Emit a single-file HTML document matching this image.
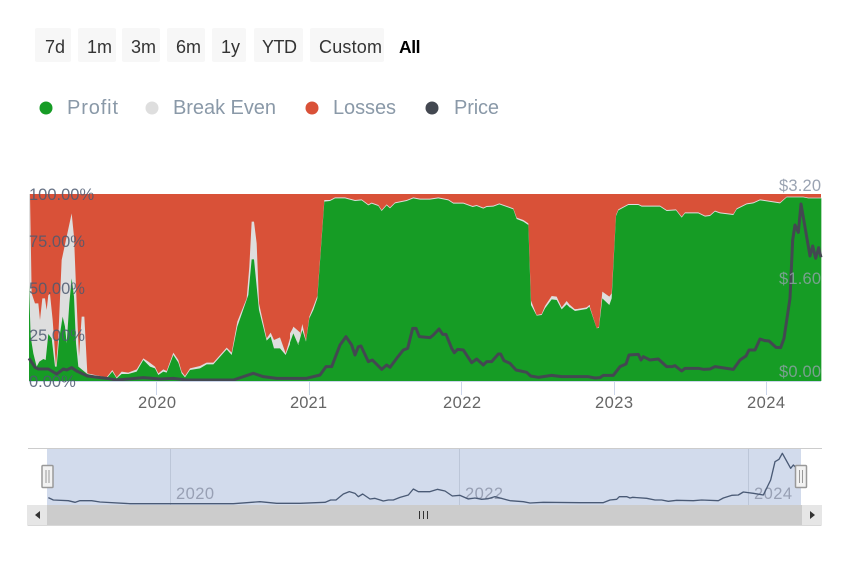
<!DOCTYPE html>
<html><head><meta charset="utf-8">
<style>
html,body{margin:0;padding:0;background:#fff;width:850px;height:567px;overflow:hidden}
svg{position:absolute;left:0;top:0}
text{font-family:"Liberation Sans",sans-serif}
</style></head><body>
<svg width="850" height="567" viewBox="0 0 850 567" xmlns="http://www.w3.org/2000/svg">
<!-- range buttons -->
<g fill="#f7f7f7">
<rect x="35" y="28" width="36" height="34" rx="2"/>
<rect x="78" y="28" width="38" height="34" rx="2"/>
<rect x="122" y="28" width="38" height="34" rx="2"/>
<rect x="167" y="28" width="38" height="34" rx="2"/>
<rect x="212" y="28" width="34" height="34" rx="2"/>
<rect x="254" y="28" width="49" height="34" rx="2"/>
<rect x="310" y="28" width="74" height="34" rx="2"/>
</g>
<g font-size="18" fill="#333">
<text x="45" y="53">7d</text>
<text x="87" y="53">1m</text>
<text x="131" y="53">3m</text>
<text x="176" y="53">6m</text>
<text x="221" y="53">1y</text>
<text x="262" y="53" textLength="35">YTD</text>
<text x="319" y="53" textLength="63">Custom</text>
</g>
<text x="399" y="53" font-size="17.500" font-weight="bold" fill="#000" textLength="21.500">All</text>
<!-- legend -->
<circle cx="46" cy="108" r="6.5" fill="#169c25"/>
<circle cx="152" cy="108" r="6.5" fill="#dedede"/>
<circle cx="312" cy="108" r="6.5" fill="#d95138"/>
<circle cx="432" cy="108" r="6.5" fill="#434851"/>
<g font-size="20" fill="#8a99a8">
<text x="67" y="114" textLength="51">Profit</text>
<text x="173" y="114" textLength="103">Break Even</text>
<text x="333" y="114" textLength="63">Losses</text>
<text x="454" y="114" textLength="45">Price</text>
</g>
<!-- plot -->
<rect x="29" y="194" width="792" height="187" fill="#d95138"/>
<g transform="translate(0,170) scale(.33333)">
<polygon fill="#dedede" points="87,633 87,72 90,72 95,370 105,400 115,400 120,450 127,385 135,385 140,420 145,375 150,372 158,450 168,590 175,500 185,270 200,200 215,130 222,200 230,400 237,560 245,440 253,440 262,610 320,622 337,600 350,622 365,605 385,608 410,598 430,565 445,575 465,590 475,610 490,598 500,603 520,548 535,570 545,605 555,618 570,595 600,588 620,578 640,578 680,533 695,548 712,455 740,385 748,290 755,155 762,155 770,220 777,400 800,505 812,488 822,510 840,502 857,550 880,470 900,487 900,633"/>
<polygon fill="#169c25" points="87,633 87,345 92,500 100,550 110,590 118,575 130,567 137,570 145,492 155,505 165,590 170,590 177,510 188,440 195,470 200,520 208,400 215,325 222,380 228,520 235,590 262,612 320,625 337,605 350,625 365,612 385,612 410,605 430,570 450,590 465,595 475,615 490,605 500,608 520,555 535,578 545,610 555,622 570,600 600,595 620,583 640,583 680,538 695,555 712,470 745,375 755,268 762,268 770,350 777,420 800,512 812,500 822,535 840,535 857,555 880,497 900,525 900,633"/>
<polyline fill="none" stroke="#434851" stroke-width="9" stroke-linejoin="round" points="87,565 105,592 115,597 145,597 170,612 190,597 200,600 215,593 230,603 262,618 320,625 350,630 430,623 480,627 520,625 560,630 700,630 760,610 790,620 830,625 900,625"/>
</g>
<g transform="translate(290,170) scale(.33333)">
<polygon fill="#dedede" points="0,633 0,490 10,472 25,522 37,462 48,512 58,440 70,410 82,378 103,90 120,90 135,82 165,82 195,90 215,88 235,103 245,98 265,105 275,120 290,103 300,112 315,97 350,90 370,82 390,86 420,86 445,82 475,88 490,98 520,98 548,108 560,105 580,113 590,108 610,107 628,100 670,115 680,143 700,150 715,160 723,392 740,435 755,432 765,408 785,378 800,380 815,412 830,393 850,418 885,415 900,405 900,633"/>
<polygon fill="#169c25" points="0,633 0,518 10,490 25,525 37,480 48,515 58,445 70,420 82,385 103,95 120,93 135,85 165,85 195,93 215,91 235,106 245,101 265,108 275,123 290,106 300,115 315,100 350,93 370,85 390,89 420,89 445,85 475,91 490,101 520,101 548,111 560,108 580,116 590,111 610,110 628,103 670,118 680,147 700,155 715,165 723,405 740,437 755,435 765,415 785,388 800,390 815,418 830,403 850,423 885,420 900,412 900,633"/>
<polyline fill="none" stroke="#434851" stroke-width="9" stroke-linejoin="round" points="0,625 50,625 90,615 108,590 125,590 150,525 168,500 185,525 195,555 205,530 213,528 235,575 247,570 275,598 290,585 300,592 320,565 340,540 353,535 368,475 378,475 388,500 420,503 430,495 447,477 458,493 468,493 485,535 493,548 503,538 520,540 545,578 560,567 580,585 590,575 605,575 625,552 632,552 642,572 660,580 678,600 710,607 722,618 745,622 785,616 815,620 900,620"/>
</g>
<g transform="translate(570,170) scale(.33333)">
<polygon fill="#dedede" points="0,633 0,405 15,418 50,412 58,405 80,475 87,470 97,365 118,380 125,370 138,135 145,118 175,102 205,102 215,107 270,107 290,120 318,118 335,140 345,127 385,127 405,137 420,135 435,122 450,127 490,132 500,115 530,100 550,97 570,88 630,97 650,80 700,80 715,83 754,83 754,633"/>
<polygon fill="#169c25" points="0,633 0,412 15,423 50,417 58,410 80,475 87,473 97,385 118,405 125,385 138,138 145,121 175,105 205,105 215,110 270,110 290,123 318,121 335,143 345,130 385,130 405,140 420,138 435,125 450,130 490,135 500,118 530,103 550,100 570,91 630,100 650,82 700,82 715,85 754,85 754,633"/>
<polyline fill="none" stroke="#434851" stroke-width="9" stroke-linejoin="round" points="0,620 55,620 75,624 90,623 100,616 130,616 150,590 168,582 177,555 205,553 213,570 220,560 240,570 265,567 290,590 305,590 315,587 335,603 345,595 385,595 400,598 420,597 435,590 490,598 510,570 528,558 537,540 555,540 570,507 585,512 597,513 618,532 632,533 642,505 660,385 668,210 675,165 685,187 693,102 720,258 728,228 737,265 746,233 753,262"/>
</g>
<rect x="29" y="381" width="792" height="1" fill="#ccd6eb"/>
<g stroke="#ccd6eb" stroke-width="1">
<line x1="156.5" y1="382" x2="156.5" y2="395"/>
<line x1="309.5" y1="382" x2="309.5" y2="395"/>
<line x1="461.5" y1="382" x2="461.5" y2="395"/>
<line x1="614.5" y1="382" x2="614.5" y2="395"/>
<line x1="766.5" y1="382" x2="766.5" y2="395"/>
</g>
<g font-size="16.5" fill="#666">
<text x="138" y="408" textLength="38">2020</text>
<text x="290" y="408" textLength="37">2021</text>
<text x="443" y="408" textLength="38">2022</text>
<text x="595" y="408" textLength="38">2023</text>
<text x="747" y="408" textLength="38">2024</text>
</g>
<g font-size="16.5" fill="#4d5a70" opacity=".85">
<text x="29" y="200">100.00%</text>
<text x="29" y="247">75.00%</text>
<text x="29" y="294">50.00%</text>
<text x="29" y="341">25.00%</text>
<text x="29" y="387">0.00%</text>
</g>
<g font-size="16.5" fill="#9aa3b2">
<text x="779" y="191" textLength="42">$3.20</text>
<text x="779" y="284" textLength="42" opacity=".75">$1.60</text>
<text x="779" y="377" textLength="42" opacity=".75">$0.00</text>
</g>
<!-- navigator -->
<rect x="47" y="449" width="754" height="56" fill="#d2dbec"/>
<rect x="28" y="448" width="794" height="1" fill="#cccccc"/>
<g fill="#bcc6d8">
<rect x="170" y="449" width="1" height="56"/>
<rect x="459" y="449" width="1" height="56"/>
<rect x="748" y="449" width="1" height="56"/>
</g>
<g font-size="16.5" fill="#98a0b4">
<text x="176" y="499" textLength="38">2020</text>
<text x="465" y="499" textLength="38">2022</text>
<text x="754" y="499" textLength="38">2024</text>
</g>
<g fill="none" stroke="#4a5a75" stroke-width="1.3" stroke-linejoin="round">
<polyline transform="translate(0,440) scale(.33333)" stroke-width="4" points="145,173 160,180 205,182 225,187 240,182 275,182 300,186 390,191 700,191 780,185 830,190 900,190"/>
<polyline transform="translate(300,440) scale(.33333)" stroke-width="4" points="0,190 75,187 92,180 108,180 130,162 148,155 165,160 175,170 188,162 210,177 225,175 250,183 265,180 280,180 300,172 325,165 340,147 355,155 390,155 412,148 435,153 457,168 480,166 505,177 525,174 545,178 565,176 585,170 630,182 670,185 690,189 730,187 840,188"/>
<polyline transform="translate(580,440) scale(.33333)" stroke-width="4" points="0,188 70,188 90,180 110,178 118,170 140,170 150,174 158,172 200,175 225,180 245,180 265,184 290,181 340,182 365,180 415,182 430,174 455,166 475,165 490,156 520,160 550,165 572,120 585,65 597,58 607,40 632,85 640,75 650,85"/>
</g>
<!-- scrollbar -->
<rect x="27.500" y="505" width="794" height="20" fill="#cccccc"/>
<rect x="28" y="505" width="19" height="20" fill="#e6e6e6"/>
<rect x="802" y="505" width="19" height="20" fill="#e6e6e6"/>
<rect x="27.500" y="525" width="794" height="1" fill="#d8d8d8"/>
<polygon points="40,511 40,519 35,515" fill="#333"/>
<polygon points="810,511 810,519 815,515" fill="#333"/>
<g fill="#333">
<rect x="419" y="511" width="1" height="8"/>
<rect x="423" y="511" width="1" height="8"/>
<rect x="427" y="511" width="1" height="8"/>
</g>
<!-- handles -->
<g fill="#f2f2f2" stroke="#999" stroke-width="1.5">
<rect x="42" y="465.500" width="11" height="22" rx="1"/>
<rect x="795.500" y="465.500" width="11" height="22" rx="1"/>
</g>
<g fill="#999">
<rect x="45.500" y="470" width="1" height="13"/>
<rect x="48.500" y="470" width="1" height="13"/>
<rect x="799" y="470" width="1" height="13"/>
<rect x="802" y="470" width="1" height="13"/>
</g>
</svg>
</body></html>
